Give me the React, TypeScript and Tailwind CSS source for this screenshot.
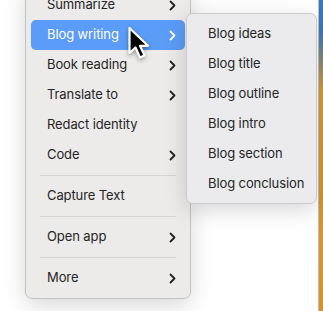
import { ReactNode } from "react";

const Chevron = ({ white }: { white?: boolean }) => (
  <svg width="7" height="11" viewBox="0 0 7 11" className="shrink-0">
    <path
      d="M1.5 1.5 L5.5 5.5 L1.5 9.5"
      fill="none"
      stroke={white ? "#ffffff" : "#222222"}
      strokeWidth="1.8"
      strokeLinecap="round"
      strokeLinejoin="round"
    />
  </svg>
);

interface RowProps {
  label: string;
  sub?: boolean;
  active?: boolean;
}

const Row = ({ label, sub, active }: RowProps) => (
  <div
    className={`h-[30px] flex items-center justify-between pl-[16px] pr-[9px] rounded-[5px] whitespace-nowrap ${
      active ? "bg-[#5a9cf7] text-white" : "text-[#252525]"
    }`}
  >
    <span>{label}</span>
    {sub && <Chevron white={active} />}
  </div>
);

const Separator = () => (
  <div className="h-[11px] flex items-center px-[9px]">
    <div className="h-px w-full bg-[#d6d5d4]" />
  </div>
);

const Menu = ({ children, className }: { children: ReactNode; className: string }) => (
  <div className={`border rounded-[7px] px-[5px] ${className}`}>{children}</div>
);

const Cursor = () => (
  <svg
    width="26"
    height="38"
    viewBox="0 0 26 38"
    className="absolute left-[127px] top-[26px] drop-shadow-[0_2px_2px_rgba(0,0,0,0.35)]"
  >
    <path
      d="M2.5 2 L2.5 27 L8.5 21.5 L13 31.5 L17.5 29.5 L13 19.8 L21 19.8 Z"
      fill="#000000"
      stroke="#ffffff"
      strokeWidth="2.2"
      strokeLinejoin="round"
    />
  </svg>
);

export default function App() {
  return (
    <div
      className="w-[323px] h-[311px] overflow-hidden bg-white flex text-[13px] tracking-[-0.1px] relative"
      style={{ fontFamily: "Inter, 'Noto Sans', sans-serif" }}
    >
      <div className="flex-1 relative">
        <Menu className="ml-[25px] mt-[-16px] w-[166px] pt-[5px] pb-[5px] bg-[#ecebea] border-[#c4c3c2] shadow-[0_6px_22px_rgba(0,0,0,0.16)]">
          <Row label="Summarize" sub />
          <Row label="Blog writing" sub active />
          <Row label="Book reading" sub />
          <Row label="Translate to" sub />
          <Row label="Redact identity" />
          <Row label="Code" sub />
          <Separator />
          <Row label="Capture Text" />
          <Separator />
          <Row label="Open app" sub />
          <Separator />
          <Row label="More" sub />
        </Menu>

        <Menu className="absolute left-[186px] top-[13px] w-[131px] pt-[5px] pb-[4px] bg-[#ebebed] border-[#cbcbcd] shadow-[0_6px_22px_rgba(0,0,0,0.16)]">
          <Row label="Blog ideas" />
          <Row label="Blog title" />
          <Row label="Blog outline" />
          <Row label="Blog intro" />
          <Row label="Blog section" />
          <Row label="Blog conclusion" />
        </Menu>

        <Cursor />
      </div>
      <div className="w-[5px] border-l border-[#bfbfbf] bg-[linear-gradient(to_bottom,#3a78c0_0px,#3a78c0_30px,#d49a3a_90px,#d8912a_311px)]" />
    </div>
  );
}
